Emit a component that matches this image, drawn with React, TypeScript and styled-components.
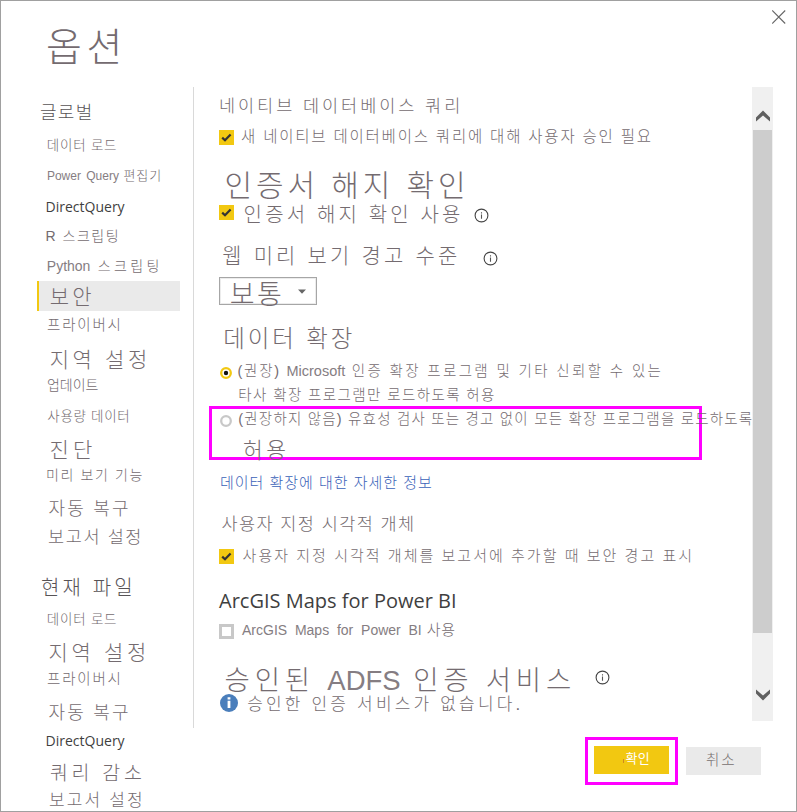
import React from "react";
import styled, { createGlobalStyle, css } from "styled-components";

const ink = "#746b70";
const magenta = "#ff00ff";

const GlobalStyle = createGlobalStyle`
  *, *::before { box-sizing: border-box; }
  body {
    margin: 0;
    background: #fff;
    font-family: "Liberation Sans", "Noto Sans CJK KR", sans-serif;
    font-weight: 300;
    color: ${ink};
    overflow: hidden;
  }
`;

const Dialog = styled.div`
  width: 797px;
  height: 812px;
  border: 1px solid #a0a0a0;
  background: #fff;
  overflow: hidden;
  display: flex;
  flex-direction: column;
`;

const Header = styled.header`
  flex: 0 0 86px;
  display: flex;
  justify-content: space-between;
  padding: 0 10px 0 45px;
`;

const Title = styled.h1`
  margin: 27px 0 0;
  font-size: 39px;
  line-height: 40px;
  letter-spacing: 4.5px;
  font-weight: 300;
`;

const CloseButton = styled.button`
  width: 14px;
  height: 14px;
  margin: 9px 0 0;
  padding: 0;
  border: 0;
  background: none;
  display: flex;
`;

const Body = styled.div`
  flex: 1;
  min-height: 0;
  display: grid;
  grid-template-columns: 192px 1fr;
`;

const Sidebar = styled.nav`
  display: flex;
  flex-direction: column;
  padding: 16px 13px 0 36px;
  height: 725px;
  overflow: hidden;
`;

type TextProps = { $size: number; $track: number; $ui?: boolean };

const textStyle = css<TextProps>`
  font-size: ${(p) => p.$size}px;
  letter-spacing: ${(p) => p.$track}px;
  line-height: 20px;
  white-space: pre;
  ${(p) =>
    p.$ui &&
    css`
      font-family: "Open Sans", sans-serif;
      font-weight: 400;
      color: #3f3f3f;
    `}
`;

const NavItem = styled.a<TextProps & { $gap: number; $indent: number }>`
  ${textStyle}
  flex: 0 0 20px;
  margin-top: ${(p) => p.$gap}px;
  padding-left: ${(p) => p.$indent}px;
`;

const NavHeading = styled(NavItem)`
  color: #575356;
`;

const NavCurrent = styled(NavItem)`
  flex-basis: 30px;
  padding-top: 6px;
  background: #eaeaea;
  border-left: 2px solid #f2c811;
`;

const Latin = styled.span<{ $size?: number; $words?: number }>`
  letter-spacing: 0;
  color: #857d82;
  word-spacing: ${(p) => p.$words ?? 0}px;
  ${(p) => p.$size && `font-size: ${p.$size}px;`}
`;

const Content = styled.div`
  display: flex;
  flex-direction: column;
`;

const Panel = styled.div`
  flex: 0 0 641px;
  display: flex;
  border-left: 1px solid #d9d9d9;
`;

const Settings = styled.main`
  flex: 0 0 558px;
  display: flex;
  flex-direction: column;
  padding: 9px 0 0 25px;
`;

const Row = styled.div<{ $gap?: number }>`
  display: flex;
  align-items: center;
  height: 20px;
  flex: 0 0 20px;
  margin-top: ${(p) => p.$gap ?? 0}px;
`;

const Text = styled.span<TextProps & { $indent?: number }>`
  ${textStyle}
  margin-left: ${(p) => p.$indent ?? 0}px;
`;

const Link = styled(Text)`
  color: #3a62b8;
`;

const Check = styled.span<{ $on?: boolean; $drop?: number }>`
  width: 15px;
  height: 15px;
  flex: 0 0 15px;
  display: flex;
  margin-top: ${(p) => p.$drop ?? 0}px;
  background: ${(p) => (p.$on ? "#f2c811" : "#fff")};
  border: ${(p) => (p.$on ? "0" : "3px solid #c8c8c8")};
`;

const IconSlot = styled.span<{ $left: number; $drop?: number }>`
  display: flex;
  margin-left: ${(p) => p.$left}px;
  margin-top: ${(p) => p.$drop ?? 0}px;
`;

const Select = styled.div`
  width: 98px;
  height: 28px;
  flex: 0 0 28px;
  margin-top: 11px;
  padding: 7px 9px 0 9px;
  border: 1px solid #a6a6a6;
  box-shadow: inset 0 0 0 1px #ececec;
  display: flex;
  justify-content: space-between;
`;

const Caret = styled.svg`
  width: 8px;
  height: 5px;
  margin: 4px 1px 0 0;
`;

const Highlighted = styled.div`
  position: relative;
  margin-top: 4px;
  z-index: 1;
  &::before {
    content: "";
    position: absolute;
    z-index: -1;
    left: -10px;
    top: -3px;
    width: 493px;
    height: 54px;
    border: 3px solid ${magenta};
  }
`;

const Scrollbar = styled.div`
  width: 21px;
  height: 634px;
  margin-left: -1px;
  background: #f0f0f0;
  display: flex;
  flex-direction: column;
  align-items: center;
`;

const ScrollButton = styled.div<{ $size: number; $pad: number }>`
  flex: 0 0 ${(p) => p.$size}px;
  padding-top: ${(p) => p.$pad}px;
`;

const Thumb = styled.div`
  width: 19px;
  height: 503px;
  background: #cdcdcd;
`;

const Footer = styled.footer`
  display: flex;
  align-items: center;
  gap: 8px;
  padding: 9px 0 0 392px;
`;

const PrimaryFrame = styled.div`
  width: 93px;
  height: 48px;
  padding: 6px;
  border: 3px solid ${magenta};
`;

const Button = styled.button<{ $primary?: boolean }>`
  width: 75px;
  height: 28px;
  padding: 0;
  border: 0;
  display: flex;
  align-items: center;
  font-family: inherit;
  font-weight: ${(p) => (p.$primary ? 400 : 300)};
  color: ${(p) => (p.$primary ? "#fff" : "#77706f")};
  background: ${(p) => (p.$primary ? "#f2c811" : "#eaeaea")};
`;

const Caption = styled(Text)`
  margin-top: -2px;
`;

const Tick = styled.i`
  width: 1px;
  height: 4px;
  margin: 2px 0 0 29px;
  background: #d08a1c;
`;

const CheckMark = () => (
  <svg width="15" height="15" viewBox="0 0 15 15" fill="none">
    <path d="M3.2 7.6 6 10.3 11.6 4.4" stroke="#333" strokeWidth="2.2" />
  </svg>
);

const RadioSlot = styled(IconSlot)`
  margin-top: 3px;
`;

const RadioMark = ({ on }: { on?: boolean }) => (
  <svg width="12" height="12" viewBox="0 0 12 12">
    <circle cx="6" cy="6" r="4.8" fill="#fff" stroke={on ? "#f2c811" : "#c8c8c8"} strokeWidth="2.3" />
    {on && <circle cx="6" cy="6" r="2.2" fill="#111" />}
  </svg>
);

const InfoOutline = () => (
  <svg width="15" height="15" viewBox="0 0 15 15" fill="none">
    <circle cx="7.5" cy="7.5" r="6.4" stroke="#444" strokeWidth="1.1" />
    <path d="M7.5 6.5v4.2M7.5 4.2v1.3" stroke="#555" strokeWidth="1.1" />
  </svg>
);

const InfoSolid = () => (
  <svg width="18" height="18" viewBox="0 0 18 18">
    <circle cx="9" cy="9" r="9" fill="#4a7ebb" />
    <path d="M7.6 3.2h2.8v2.3H7.6zM7.6 6.7h2.8v7.2H7.6z" fill="#fff" />
  </svg>
);

const Chevron = ({ down }: { down?: boolean }) => (
  <svg width="14" height="12" viewBox="0 0 14 12">
    <path
      d={down ? "M0 .4 7 6.6 14 .4V4.6L7 11.6 0 4.6Z" : "M0 11.6 7 5.4 14 11.6V7.4L7 .4 0 7.4Z"}
      fill="#606060"
    />
  </svg>
);

type Item = {
  label: string;
  latin?: string;
  size: number;
  latinSize?: number;
  track: number;
  gap: number;
  indent: number;
  kind?: "heading" | "current" | "ui";
};

const items: Item[] = [
  { label: "글로벌", size: 18, track: 1.3, gap: 0, indent: 3, kind: "heading" },
  { label: "데이터 로드", size: 13.5, track: 0.8, gap: 13, indent: 9.7 },
  { label: " 편집기", latin: "Power Query", size: 13, latinSize: 12, track: 0.9, gap: 10, indent: 9.9 },
  { label: "DirectQuery", size: 14, track: 0, gap: 11, indent: 8.6, kind: "ui" },
  { label: "R 스크립팅", size: 14, track: 1.5, gap: 9, indent: 8.6 },
  { label: " 스크립팅", latin: "Python", size: 14, track: 3.4, gap: 10, indent: 9.8 },
  { label: "보안", size: 21, track: 3.2, gap: 5, indent: 10.7, kind: "current" },
  { label: "프라이버시", size: 14.5, track: 1.8, gap: 4, indent: 10 },
  { label: "지역 설정", size: 21, track: 3.6, gap: 15, indent: 12.7 },
  { label: "업데이트", size: 14, track: 0, gap: 5, indent: 9.9 },
  { label: "사용량 데이터", size: 13.5, track: 0.7, gap: 12, indent: 10.3 },
  { label: "진단", size: 21, track: 4.4, gap: 13, indent: 12.4 },
  { label: "미리 보기 기능", size: 14, track: 1.65, gap: 5, indent: 8.9 },
  { label: "자동 복구", size: 18, track: 2.2, gap: 14, indent: 11.5 },
  { label: "보고서 설정", size: 17.5, track: 1.6, gap: 8, indent: 11.1 },
  { label: "현재 파일", size: 20, track: 3.1, gap: 31, indent: 4, kind: "heading" },
  { label: "데이터 로드", size: 13.5, track: 0.8, gap: 12, indent: 9.7 },
  { label: "지역 설정", size: 21, track: 3.7, gap: 13, indent: 11.5 },
  { label: "프라이버시", size: 14.5, track: 1.8, gap: 6, indent: 10 },
  { label: "자동 복구", size: 18, track: 2.2, gap: 14, indent: 11.5 },
  { label: "DirectQuery", size: 14, track: 0, gap: 8, indent: 8.6, kind: "ui" },
  { label: "쿼리 감소", size: 19.5, track: 3.7, gap: 12, indent: 12.9 },
  { label: "보고서 설정", size: 17, track: 2.1, gap: 8, indent: 12.1 },
];

export default function App() {
  return (
    <>
      <GlobalStyle />
      <Dialog>
        <Header>
          <Title>옵션</Title>
          <CloseButton aria-label="닫기">
            <svg width="14" height="14" viewBox="0 0 14 14">
              <path d="M.2.5 13.2 13.5M13.2.5.2 13.5" stroke="#666" strokeWidth="1.1" />
            </svg>
          </CloseButton>
        </Header>
        <Body>
          <Sidebar>
            {items.map((it, i) => {
              const Part =
                it.kind === "heading" ? NavHeading : it.kind === "current" ? NavCurrent : NavItem;
              return (
                <Part
                  key={i}
                  $size={it.size}
                  $track={it.track}
                  $gap={it.gap}
                  $indent={it.indent}
                  $ui={it.kind === "ui"}
                >
                  {it.latin && (
                    <Latin $size={it.latinSize} $words={2}>
                      {it.latin}
                    </Latin>
                  )}
                  {it.label}
                </Part>
              );
            })}
          </Sidebar>
          <Content>
            <Panel>
              <Settings>
                <Row>
                  <Text $size={17.5} $track={2.95}>네이티브 데이터베이스 쿼리</Text>
                </Row>
                <Row $gap={11}>
                  <Check $on $drop={1}><CheckMark /></Check>
                  <Text $size={15.5} $track={1.79} $indent={7}>
                    새 네이티브 데이터베이스 쿼리에 대해 사용자 승인 필요
                  </Text>
                </Row>
                <Row $gap={29}>
                  <Text $size={30} $track={3.9} $indent={5.6}>인증서 해지 확인</Text>
                </Row>
                <Row $gap={9}>
                  <Check $on $drop={-5}><CheckMark /></Check>
                  <Text $size={20} $track={3.15} $indent={9.6}>인증서 해지 확인 사용</Text>
                  <IconSlot $left={10.5}><InfoOutline /></IconSlot>
                </Row>
                <Row $gap={21}>
                  <Text $size={21} $track={3.15} $indent={3.2}>웹 미리 보기 경고 수준</Text>
                  <IconSlot $left={22.5} $drop={4}><InfoOutline /></IconSlot>
                </Row>
                <Select>
                  <Text $size={27} $track={2.4} $indent={0.7}>보통</Text>
                  <Caret viewBox="0 0 8 5">
                    <path d="M0 .5h8L4 4.7z" fill="#666" />
                  </Caret>
                </Select>
                <Row $gap={24}>
                  <Text $size={23.5} $track={2.9} $indent={4.2}>데이터 확장</Text>
                </Row>
                <Row $gap={12}>
                  <RadioSlot $left={1}><RadioMark on /></RadioSlot>
                  <Text $size={14.5} $track={1.7} $indent={5.6}>{"(권장) "}</Text>
                  <Text $size={14.5} $track={2.36}>
                    <Latin>Microsoft</Latin>
                    {" 인증 확장 프로그램 및 기타 신뢰할 수 있는"}
                  </Text>
                </Row>
                <Row $gap={4}>
                  <Text $size={14.5} $track={1.4} $indent={19.3}>
                    타사 확장 프로그램만 로드하도록 허용
                  </Text>
                </Row>
                <Highlighted>
                  <Row>
                    <RadioSlot $left={1}><RadioMark /></RadioSlot>
                    <Text $size={14.5} $track={1.2} $indent={6.3}>
                      (권장하지 않음) 유효성 검사 또는 경고 없이 모든 확장 프로그램을 로드하도록
                    </Text>
                  </Row>
                  <Row $gap={12}>
                    <Text $size={21.5} $track={3.4} $indent={24}>허용</Text>
                  </Row>
                </Highlighted>
                <Row $gap={12}>
                  <Link $size={15} $track={0.98} $indent={1}>데이터 확장에 대한 자세한 정보</Link>
                </Row>
                <Row $gap={21}>
                  <Text $size={17.5} $track={1.42} $indent={2.5}>사용자 지정 시각적 개체</Text>
                </Row>
                <Row $gap={12}>
                  <Check $on $drop={1}><CheckMark /></Check>
                  <Text $size={15} $track={2.03} $indent={8.6}>
                    사용자 지정 시각적 개체를 보고서에 추가할 때 보안 경고 표시
                  </Text>
                </Row>
                <Row $gap={25}>
                  <Text $ui $size={20} $track={0}>ArcGIS Maps for Power BI</Text>
                </Row>
                <Row $gap={9}>
                  <Check $drop={3} />
                  <Text $size={15} $track={0.8} $indent={8}>
                    <Latin $size={14} $words={3.9}>ArcGIS Maps for Power BI</Latin>
                    {" 사용"}
                  </Text>
                </Row>
                <Row $gap={31}>
                  <Text $size={27.5} $track={4.8} $indent={5.6}>
                    {"승인된 "}
                    <Latin>ADFS</Latin>
                    {" 인증 서비스"}
                  </Text>
                  <IconSlot $left={19.3} $drop={-8}><InfoOutline /></IconSlot>
                </Row>
                <Row $gap={4}>
                  <IconSlot $left={1} $drop={-4}><InfoSolid /></IconSlot>
                  <Text $size={17} $track={3.18} $indent={9.2}>승인한 인증 서비스가 없습니다.</Text>
                </Row>
              </Settings>
              <Scrollbar>
                <ScrollButton $size={43} $pad={21}><Chevron /></ScrollButton>
                <Thumb />
                <ScrollButton $size={88} $pad={54}><Chevron down /></ScrollButton>
              </Scrollbar>
            </Panel>
            <Footer>
              <PrimaryFrame>
                <Button $primary>
                  <Tick />
                  <Caption $size={13} $track={0.3} $indent={1.5}>확인</Caption>
                </Button>
              </PrimaryFrame>
              <Button>
                <Caption $size={14.5} $track={2} $indent={20}>취소</Caption>
              </Button>
            </Footer>
          </Content>
        </Body>
      </Dialog>
    </>
  );
}
